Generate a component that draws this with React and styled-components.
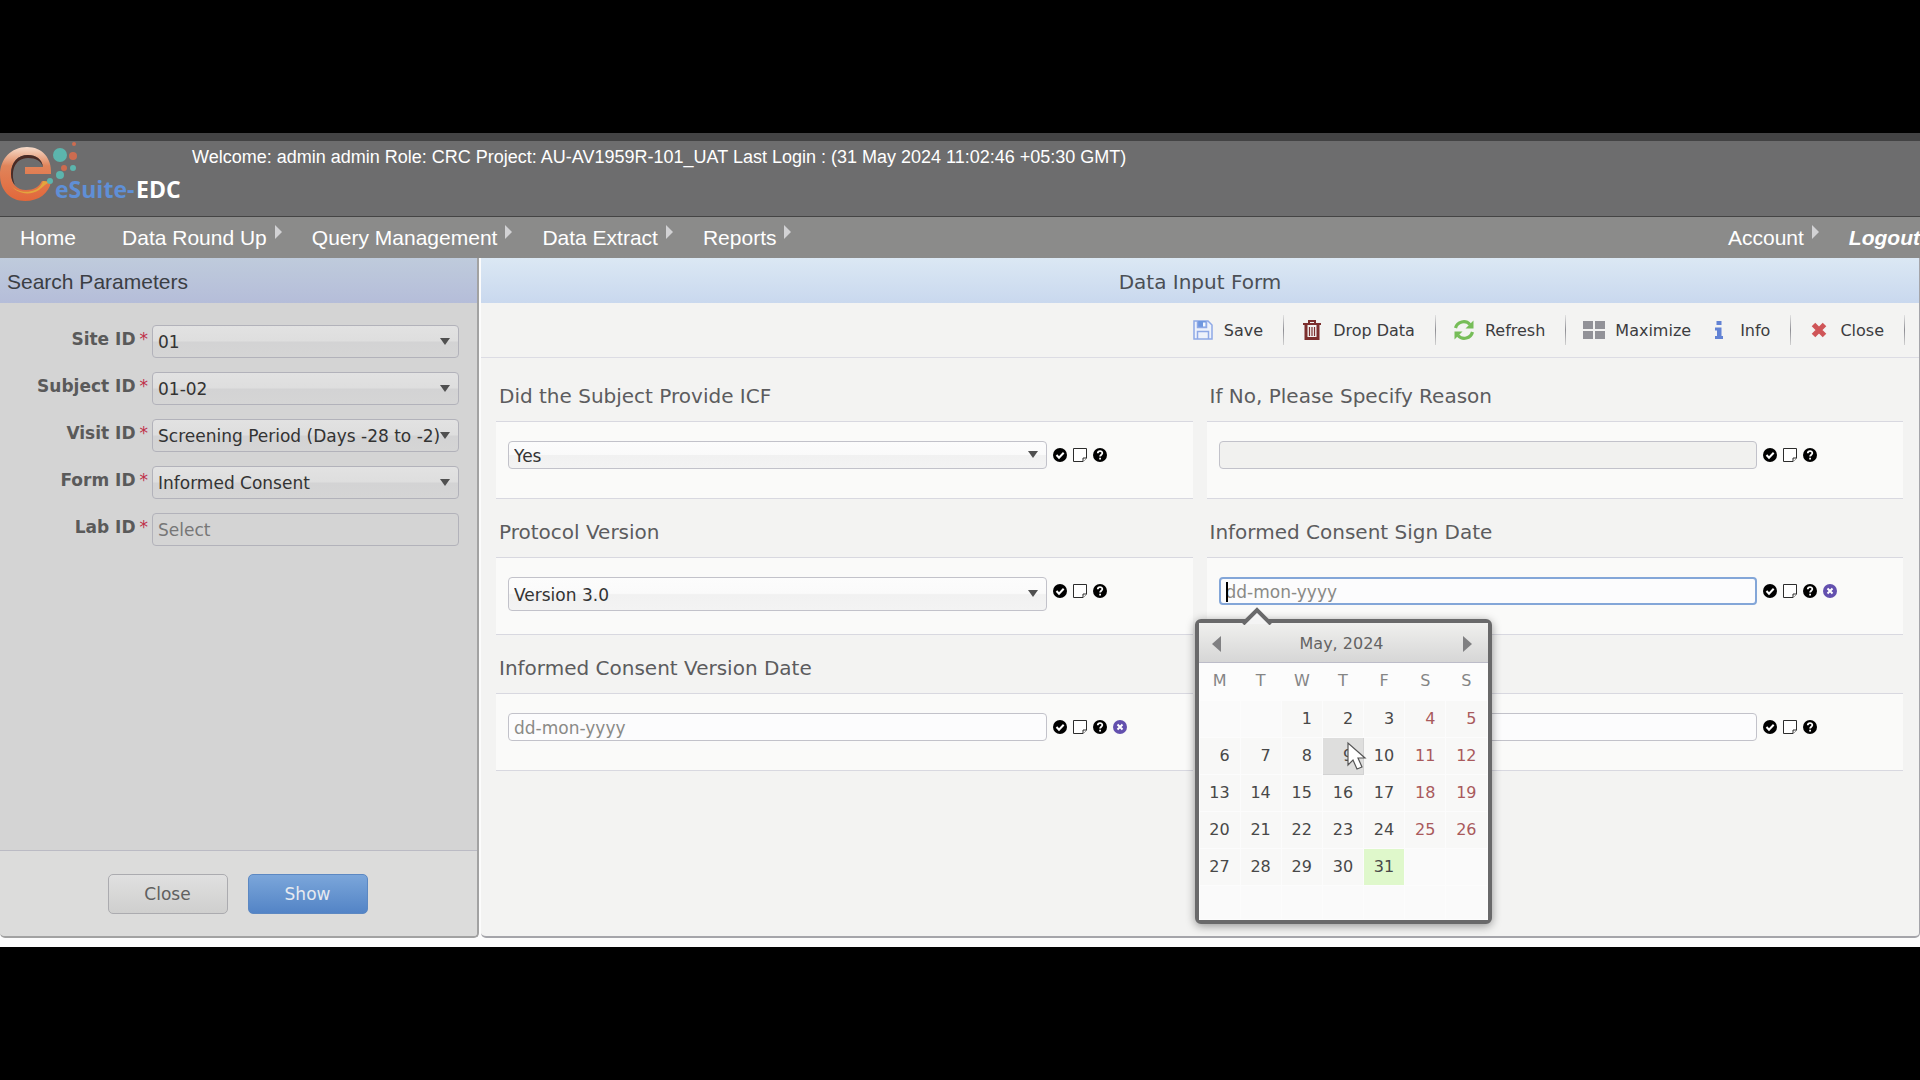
import React from "react";
import styled, { createGlobalStyle, css } from "styled-components";

const sans = `"Liberation Sans", Arial, sans-serif`;
const verdana = `"DejaVu Sans", Verdana, sans-serif`;

const GlobalStyle = createGlobalStyle`
  *, *::before, *::after { box-sizing: border-box; }
  body { margin: 0; background: #000; font-family: ${verdana}; }
  button, input, select { font-family: inherit; margin: 0; }
`;

const Stage = styled.div`
  min-height: 100vh;
  display: flex;
  flex-direction: column;
  justify-content: center;
  overflow-x: hidden;
  background: #000;
`;

const Window = styled.div`
  background: #fcfcfc;
  padding-bottom: 9px;
`;

/* header */

const Header = styled.header`
  display: flex;
  align-items: flex-start;
  height: 84px;
  border-top: 8px solid #434344;
  border-bottom: 1px solid #444;
  background: #6d6d6e;
`;

const Logo = styled.svg`
  flex: none;
  width: 192px;
  height: 72px;
`;

const Welcome = styled.p`
  margin: 0;
  padding-top: 4px;
  color: #fff;
  font: 18px/24px ${sans};
`;

const Nav = styled.nav`
  display: flex;
  justify-content: space-between;
  height: 41px;
  padding-left: 20px;
  overflow: hidden;
  background: #8b8b8a;
`;

const NavGroup = styled.div`
  display: flex;
`;

const NavLink = styled.a`
  display: flex;
  align-items: center;
  color: #fff;
  font: ${(p) => (p.$strong ? "italic bold" : "normal")} 21px/24px ${sans};
  text-decoration: none;
  white-space: nowrap;
  margin-right: ${(p) => (p.$plain ? 46 : 30)}px;

  &:last-child { margin-right: 0; }

  ${(p) => !p.$plain && css`
    &::after {
      content: "";
      margin: 0 0 12px 8px;
      border: 7px solid transparent;
      border-left-color: #d2d2d4;
      border-right: 0;
    }
  `}
`;

/* panels */

const Workspace = styled.main`
  display: grid;
  grid-template-columns: calc(25% - 1px) minmax(0, 1fr);
  gap: 2px;
  min-height: 680px;
`;

const SidePanel = styled.section`
  display: flex;
  flex-direction: column;
  overflow: hidden;
  border: solid #a2a2a2;
  border-width: 0 2px 2px 0;
  border-radius: 0 0 5px 5px;
  background: #d4d4d4;
`;

const FormPanel = styled.section`
  display: flex;
  flex-direction: column;
  border: solid #a5a5aa;
  border-width: 0 1px 2px 0;
  border-radius: 0 0 5px 5px;
  background: #f3f3f2;
`;

const PanelTitle = styled.h2`
  margin: 0;
  height: 45px;
  padding: 3px 7px 0;
  font: ${(p) => (p.$center ? `20px/42px ${verdana}` : `21px/42px ${sans}`)};
  text-align: ${(p) => (p.$center ? "center" : "left")};
  color: ${(p) => (p.$center ? "#4b4f55" : "#3b3e44")};
  background: ${(p) =>
    p.$center
      ? "linear-gradient(#dbe8f4, #c9d8ee)"
      : "linear-gradient(#bfcbdc, #b5bdd9)"};
`;

/* inputs */

const SelectBox = styled.span`
  position: relative;
  display: block;
  min-width: 0;

  &::after {
    content: "";
    position: absolute;
    right: 9px;
    top: calc(50% - 4px);
    border: 5px solid transparent;
    border-top: 7px solid #505050;
    border-bottom: 0;
    pointer-events: none;
  }
`;

const fieldLook = css`
  display: block;
  width: 100%;
  padding: ${(p) => (p.$dim ? 0 : 2)}px 6px 0 5px;
  border: 1px solid ${(p) => (p.$dim ? "#b2b2ba" : "#c2c2ca")};
  border-radius: 4px;
  color: #333;
  font-size: 17px;
  outline: none;
`;

const Select = styled.select`
  ${fieldLook}
  appearance: none;
  height: ${(p) => p.$h}px;
  padding-right: 0;
  background: ${(p) =>
    p.$dim
      ? "linear-gradient(#e2e2e2 0%, #dedede 48%, #d3d3d4 52%, #d5d5d5)"
      : "linear-gradient(#fcfcfc 0%, #fafafa 48%, #f1f1f1 52%, #f3f3f3)"};
`;

const Input = styled.input`
  ${fieldLook}
  height: ${(p) => (p.$dim ? 33 : 28)}px;
  background: ${(p) => (p.$dim ? "#d4d4d4" : "#fcfcfd")};

  &::placeholder { color: ${(p) => (p.$dim ? "#777" : "#8a8a86")}; opacity: 1; }
  &:disabled { background: ${(p) => (p.$dim ? "#d4d4d4" : "#f1f1ef")}; }

  ${(p) => p.$active && css`
    border: 2px solid #83a6d8;
  `}
`;

/* search */

const SearchForm = styled.form`
  flex: 1;
  display: flex;
  flex-direction: column;
  gap: 14px;
  padding: 22px 18px 0 0;
`;

const SearchRow = styled.div`
  display: grid;
  grid-template-columns: 148px minmax(0, 1fr);
  column-gap: 4px;
`;

const SearchLabel = styled.label`
  color: #5a5a5a;
  font-size: 17px;
  font-weight: bold;
  line-height: 28px;
  text-align: right;
`;

const Star = styled.span`
  margin-left: 4px;
  color: #c0304a;
  font-weight: normal;
`;

const SearchActions = styled.div`
  display: flex;
  justify-content: center;
  gap: 20px;
  height: 86px;
  padding: 23px 2px 0 0;
  border-top: 1px solid #bbbbc4;
  background: #dcdcdb;
`;

const ActionButton = styled.button`
  width: 120px;
  height: 40px;
  border: 1px solid ${(p) => (p.$primary ? "#5c88c2" : "#ababaf")};
  border-radius: 5px;
  color: ${(p) => (p.$primary ? "#e6eaf0" : "#606060")};
  background: ${(p) =>
    p.$primary
      ? "linear-gradient(#7ba6da, #5384c6)"
      : "linear-gradient(#e0e0e0, #cfcfce)"};
  font-size: 17px;
`;

/* toolbar */

const Toolbar = styled.div`
  display: flex;
  justify-content: flex-end;
  align-items: center;
  height: 55px;
  padding-right: 14px;
  border-bottom: 1px solid #dcdce4;
`;

const ToolButton = styled.button`
  display: flex;
  align-items: center;
  gap: 10px;
  height: 32px;
  padding: 0 ${(p) => (p.$joined ? 0 : 20)}px 0 17px;
  border: 0;
  background: none;
  color: #3c3c40;
  font-size: 16px;

  svg { width: 22px; height: 22px; flex: none; }
`;

const Divider = styled.span`
  width: 1px;
  height: 30px;
  background: linear-gradient(#e2e2e2, #8e8e94 50%, #d2d2d2);
`;

/* questions */

const Questions = styled.div`
  display: grid;
  grid-template-columns: repeat(2, minmax(0, 1fr));
  column-gap: 14px;
  padding: 5px 16px 0 15px;
`;

const QuestionLabel = styled.label`
  display: block;
  height: 58px;
  padding: 8px 3px 0;
  color: #5c5c5e;
  font-size: 20px;
  line-height: 50px;
`;

const Answer = styled.div`
  display: flex;
  align-items: flex-start;
  height: 78px;
  padding: 19px 0 0 12px;
  border: solid #d8d8e0;
  border-width: 1px 0;
  background: #fafaf9;
`;

const FieldSlot = styled.div`
  position: relative;
  flex: 1;
  min-width: 0;
`;

const Marks = styled.div`
  display: flex;
  align-items: center;
  gap: 6px;
  width: 146px;
  height: 28px;
  padding-left: 6px;
`;

const MarkButton = styled.button`
  display: flex;
  padding: 0;
  border: 0;
  background: none;

  svg { width: 14px; height: 14px; }
`;

/* calendar */

const Caret = styled.span`
  position: absolute;
  left: 7px;
  top: 5px;
  width: 2px;
  height: 20px;
  background: #000;
`;

const Calendar = styled.div`
  position: absolute;
  z-index: 2;
  top: calc(100% + 14px);
  left: -24px;
  width: 297px;
  border: 4px solid #69696a;
  border-radius: 6px;
  background: #fcfcfc;
  box-shadow: 0 2px 10px rgba(0, 0, 0, 0.4);
`;

const CalendarTip = styled.svg`
  position: absolute;
  left: 42px;
  top: -16px;
  width: 32px;
  height: 18px;
`;

const MonthBar = styled.div`
  display: flex;
  align-items: center;
  justify-content: space-between;
  height: 40px;
  padding: 2px 15px 0 12px;
  border-bottom: 1px solid #bcbcc8;
  background: linear-gradient(#f0f0ee, #d6d6d6);
  color: #636363;
  font-size: 16px;
`;

const MonthArrow = styled.button`
  width: 10px;
  height: 16px;
  padding: 0;
  border: solid transparent;
  border-width: 8px 0;
  border-${(p) => p.$side}: 9px solid #808082;
  background: none;
`;

const Days = styled.table`
  width: 100%;
  table-layout: fixed;
  border-collapse: collapse;
  font-size: 16px;
  line-height: 20px;

  tr { height: 37px; }
  tr:last-child { height: 34px; }
  thead tr:last-child { height: 37px; }
  th { padding: 0; color: #858585; font-weight: normal; }
`;

const Day = styled.td`
  padding: 0 10px 0 0;
  border: 1px solid #fcfcfc;
  text-align: right;
  color: ${(p) => (p.$weekend ? "#a95a5c" : "#484848")};
  background: ${(p) =>
    p.$hover ? "#dededd" : p.$today ? "#dff8cb" : p.$filled ? "#f8f8f7" : "#fafafa"};
  ${(p) => p.$hover && "border-color: #d2d2d2;"}
`;

const Pointer = styled.svg`
  position: absolute;
  left: 148px;
  top: 118px;
  width: 20px;
  height: 29px;
`;

const icons = {
  save: (
    <svg viewBox="0 0 22 22" fill="none" stroke="#8fa9e6" strokeWidth="1.5" aria-hidden="true">
      <path d="M2 2h14l4 4v14H2z" fill="#eef2fb" />
      <path d="M5.500 2v6.500h9V2" fill="#6f97df" />
      <path d="M11 3.500h2.500v4H11z" fill="#f5f8ff" stroke="none" />
      <path d="M5.500 20v-7.500h11V20" />
    </svg>
  ),
  drop: (
    <svg viewBox="0 0 22 22" fill="none" stroke="#7c2f2e" strokeWidth="2" aria-hidden="true">
      <path d="M2 5h18M8 4V2h6v2" />
      <path d="M5 6v13.500h12V6" strokeWidth="3" />
      <path d="M8.500 8v9M11 8v9M13.500 8v9" strokeWidth="1.200" />
    </svg>
  ),
  refresh: (
    <svg viewBox="0 0 22 22" fill="none" stroke="#76bd58" strokeWidth="3.200" aria-hidden="true">
      <path d="M2.500 9A8.500 8.500 0 0 1 17 5.500M19.500 13A8.500 8.500 0 0 1 5 16.500" />
      <path d="M20.500 1.500v8h-8zM1.500 20.500v-8h8z" fill="#76bd58" stroke="none" />
    </svg>
  ),
  maximize: (
    <svg viewBox="0 0 22 22" fill="#929298" aria-hidden="true">
      <path d="M0 2h10v8H0zM12 2h10v8H12zM0 12h10v8H0zM12 12h10v8H12z" />
    </svg>
  ),
  info: (
    <svg viewBox="0 0 22 22" fill="#6282d4" aria-hidden="true">
      <path d="M8.500 2h5v4h-5zM7 8.500h6.500V17H15v3H7v-3h2v-5.500H7z" />
    </svg>
  ),
  close: (
    <svg viewBox="0 0 22 22" stroke="#cf5558" strokeWidth="5" aria-hidden="true">
      <path d="M5.500 5.500l11 11M16.500 5.500l-11 11" />
    </svg>
  ),
};

const marks = {
  Verified: (
    <svg viewBox="0 0 14 14" aria-hidden="true">
      <circle cx="7" cy="7" r="7" />
      <path d="M3.500 7l2.500 2.700 4.700-5" fill="none" stroke="#fff" strokeWidth="2" />
    </svg>
  ),
  Note: (
    <svg viewBox="0 0 14 14" fill="#fff" stroke="#2c2c2c" strokeWidth="1" aria-hidden="true">
      <path d="M.5.5h13v9.500l-3.500 3.500H.5z" />
      <path d="M13.500 10H10v3.500" />
    </svg>
  ),
  Help: (
    <svg viewBox="0 0 14 14" aria-hidden="true">
      <circle cx="7" cy="7" r="7" />
      <path d="M4.800 5.300C4.800 2.400 9.400 2.500 9.300 5.200 9.200 6.700 7.100 6.800 7.100 8.600" fill="none" stroke="#fff" strokeWidth="1.800" />
      <path d="M6.200 9.800h1.800v1.800H6.200z" fill="#fff" />
    </svg>
  ),
  Clear: (
    <svg viewBox="0 0 14 14" aria-hidden="true">
      <circle cx="7" cy="7" r="7" fill="#6350ae" />
      <path d="M4.500 4.500l5 5M9.500 4.500l-5 5" stroke="#fff" strokeWidth="2" />
    </svg>
  ),
};

function BrandLogo() {
  return (
    <Logo viewBox="0 0 192 72" role="img" aria-label="eSuite-EDC">
      <defs>
        <linearGradient id="ring" x1="0" y1="0" x2="0" y2="1">
          <stop offset="0" stopColor="#f6dccb" />
          <stop offset="0.350" stopColor="#e0845a" />
          <stop offset="1" stopColor="#e2673a" />
        </linearGradient>
      </defs>
      <path
        d="M51 33C52 17 42 6 27 6 11 6 0 18 0 34c0 15 10 26 25 26 14 0 24-8 26-19l-9-1c-3 6-8 9-16 9-9 0-15-6-15-16 0-12 7-19 17-19 8 0 14 4 15 12H25v7z"
        fill="url(#ring)"
      />
      <path d="M43 26c-1-8-7-12-15-12-10 0-17 7-17 19 0 5 2 9 4 11-5-12-1-27 13-27 8 0 13 3 15 9z" fill="#4a2a24" />
      <path d="M10 43c4 7 16 10 25 6 5-2 7-6 8-9l8 1c-5 1-8 5-12 8-9 6-23 4-29-6z" fill="#e3a53d" />
      <g fill="#5cb5ad">
        <circle cx="60" cy="14" r="7" />
        <circle cx="73" cy="27" r="3" />
        <circle cx="60" cy="34" r="4" />
        <circle cx="50" cy="40" r="3" />
      </g>
      <g fill="#cd6c50">
        <circle cx="74" cy="3" r="2" />
        <circle cx="73" cy="15" r="4" />
        <circle cx="64" cy="27" r="3" />
      </g>
      <text x="55" y="57" fontFamily="Open Sans, sans-serif" fontSize="23" fontWeight="700">
        <tspan fill="#5f8fd6">eSuite-</tspan>
        <tspan x="136" fill="#fff">EDC</tspan>
      </text>
    </Logo>
  );
}

const weeks = [
  ["", "", 1, 2, 3, 4, 5],
  [6, 7, 8, 9, 10, 11, 12],
  [13, 14, 15, 16, 17, 18, 19],
  [20, 21, 22, 23, 24, 25, 26],
  [27, 28, 29, 30, 31, "", ""],
  ["", "", "", "", "", "", ""],
];

function DatePicker() {
  return (
    <Calendar>
      <CalendarTip viewBox="0 0 32 18" aria-hidden="true">
        <path d="M2 17L16 3l14 14" fill="#f4f4f4" stroke="#69696a" strokeWidth="4" />
      </CalendarTip>
      <MonthBar>
        <MonthArrow type="button" $side="right" aria-label="Previous month" />
        <span>May, 2024</span>
        <MonthArrow type="button" $side="left" aria-label="Next month" />
      </MonthBar>
      <Days>
        <thead>
          <tr>
            {["M", "T", "W", "T", "F", "S", "S"].map((d, i) => (
              <th key={i} scope="col">{d}</th>
            ))}
          </tr>
        </thead>
        <tbody>
          {weeks.map((week, w) => (
            <tr key={w}>
              {week.map((day, i) => (
                <Day key={i} $weekend={i > 4} $filled={day !== ""} $hover={day === 9} $today={day === 31}>
                  {day}
                </Day>
              ))}
            </tr>
          ))}
        </tbody>
      </Days>
      <Pointer viewBox="0 0 20 29" aria-hidden="true">
        <path d="M1 2v22l5-5 4 9 5-2-4-9h7z" fill="#fff" stroke="#555" strokeWidth="1.200" />
      </Pointer>
    </Calendar>
  );
}

const searchFields = [
  ["Site ID", "01"],
  ["Subject ID", "01-02"],
  ["Visit ID", "Screening Period (Days -28 to -2)"],
  ["Form ID", "Informed Consent"],
  ["Lab ID", null],
];

const questions = [
  { id: "icf", label: "Did the Subject Provide ICF", option: "Yes", height: 28 },
  { id: "reason", label: "If No, Please Specify Reason", disabled: true },
  { id: "protocol", label: "Protocol Version", option: "Version 3.0", height: 34 },
  { id: "sign", label: "Informed Consent Sign Date", date: true, active: true },
  { id: "version", label: "Informed Consent Version Date", date: true },
  { id: "extra", label: "" },
];

const tools = [
  ["save", "Save"],
  ["drop", "Drop Data"],
  ["refresh", "Refresh"],
  ["maximize", "Maximize"],
  ["info", "Info"],
  ["close", "Close"],
];

function Question({ q }) {
  const names = ["Verified", "Note", "Help"].concat(q.date ? ["Clear"] : []);
  return (
    <div>
      <QuestionLabel htmlFor={q.id}>{q.label}</QuestionLabel>
      <Answer>
        <FieldSlot>
          {q.option ? (
            <SelectBox>
              <Select id={q.id} $h={q.height}>
                <option>{q.option}</option>
              </Select>
            </SelectBox>
          ) : (
            <Input
              id={q.id}
              type="text"
              placeholder={q.date ? "dd-mon-yyyy" : undefined}
              disabled={q.disabled}
              $active={q.active}
            />
          )}
          {q.active && <Caret />}
          {q.active && <DatePicker />}
        </FieldSlot>
        <Marks>
          {names.map((n) => (
            <MarkButton key={n} type="button" aria-label={n}>{marks[n]}</MarkButton>
          ))}
        </Marks>
      </Answer>
    </div>
  );
}

export default function App() {
  return (
    <Stage>
      <GlobalStyle />
      <Window>
        <Header>
          <BrandLogo />
          <Welcome>
            Welcome: admin admin Role: CRC Project: AU-AV1959R-101_UAT Last Login : (31 May 2024 11:02:46 +05:30 GMT)
          </Welcome>
        </Header>
        <Nav>
          <NavGroup>
            <NavLink href="#home" $plain>Home</NavLink>
            <NavLink href="#round-up">Data Round Up</NavLink>
            <NavLink href="#query">Query Management</NavLink>
            <NavLink href="#extract">Data Extract</NavLink>
            <NavLink href="#reports">Reports</NavLink>
          </NavGroup>
          <NavGroup>
            <NavLink href="#account">Account</NavLink>
            <NavLink href="#logout" $plain $strong>Logout</NavLink>
          </NavGroup>
        </Nav>
        <Workspace>
          <SidePanel>
            <PanelTitle>Search Parameters</PanelTitle>
            <SearchForm>
              {searchFields.map(([label, value]) => (
                <SearchRow key={label}>
                  <SearchLabel htmlFor={label}>
                    {label}
                    <Star>*</Star>
                  </SearchLabel>
                  {value ? (
                    <SelectBox>
                      <Select id={label} $dim $h={33}>
                        <option>{value}</option>
                      </Select>
                    </SelectBox>
                  ) : (
                    <Input id={label} type="text" placeholder="Select" disabled $dim />
                  )}
                </SearchRow>
              ))}
            </SearchForm>
            <SearchActions>
              <ActionButton type="button">Close</ActionButton>
              <ActionButton type="button" $primary>Show</ActionButton>
            </SearchActions>
          </SidePanel>
          <FormPanel>
            <PanelTitle $center>Data Input Form</PanelTitle>
            <Toolbar>
              {tools.map(([icon, text]) => (
                <React.Fragment key={icon}>
                  <ToolButton type="button" $joined={icon === "maximize"}>
                    {icons[icon]}
                    {text}
                  </ToolButton>
                  {icon !== "maximize" && <Divider />}
                </React.Fragment>
              ))}
            </Toolbar>
            <Questions>
              {questions.map((q) => (
                <Question key={q.id} q={q} />
              ))}
            </Questions>
          </FormPanel>
        </Workspace>
      </Window>
    </Stage>
  );
}
